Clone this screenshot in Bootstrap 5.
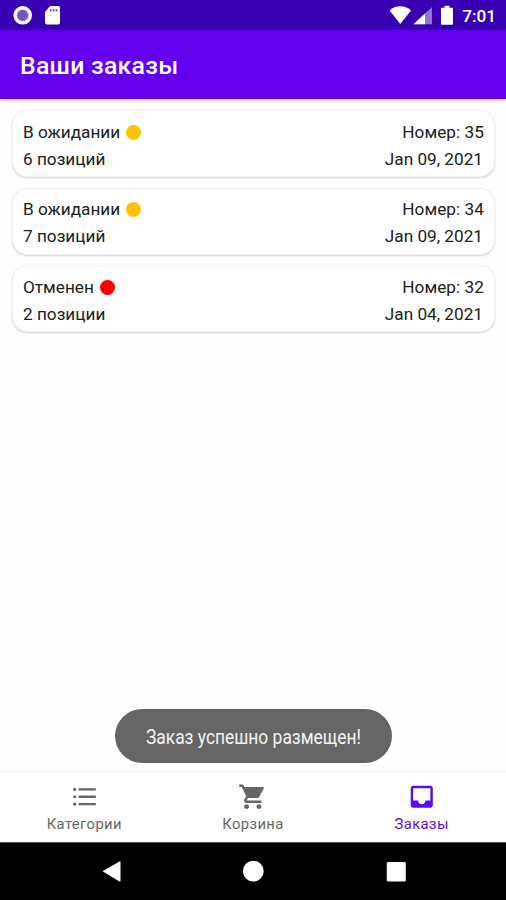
<!DOCTYPE html>
<html lang="ru">
<head>
<meta charset="utf-8">
<meta name="viewport" content="width=device-width, initial-scale=1">
<title>Ваши заказы</title>
<link href="https://cdn.jsdelivr.net/npm/bootstrap@5.3.0/dist/css/bootstrap.min.css" rel="stylesheet">
<style>
  body { font-family: Roboto, sans-serif; color: #202020; background: #fefefe; height: 900px; overflow: hidden; }
  .status-bar { height: 30px; background: #3900b3; padding: 0 10px 0 13px; }
  .clock { font-size: 17.2px; font-weight: 500; line-height: 30px; margin-left: 7px; padding-top: 2px; }
  .app-bar { height: 69px; background: #6200ee; padding-left: 20px; box-shadow: 0 1px 4px rgba(0,0,0,.28); z-index: 1; }
  .app-title { font-size: 24.8px; font-weight: 500; line-height: 32px; letter-spacing: .27px; padding-top: 3px; }
  .orders { padding: 11px 11px 0 12px; gap: 10.5px; }
  .order { height: 67px; border: 1px solid #f1f1f1; border-radius: 15px; background: #fff; padding: 7.500px 10px 0; box-shadow: 0 1px 2px rgba(0,0,0,.18); font-size: 17.2px; line-height: 27px; }
  .dot { width: 15px; height: 15px; margin-left: 6px; }
  .dot-wait { background: #ffc107; }
  .dot-cancel { background: #f00; }
  .num { letter-spacing: .05px; }
  .date { margin-right: 1px; }
  .snack { width: 277px; height: 54px; background: #656565; color: #f4f4f4; margin-bottom: 8px; font-size: 20px; }
  .snack span { transform: scaleX(.87); white-space: nowrap; padding: 1px 0 0 2px; }
  .tabs { height: 71px; border-top: 1px solid #f2f2f2; background: #fff; font-size: 14.8px; }
  .tab-item { color: #666; padding-top: 10px; line-height: 18px; letter-spacing: .4px; }
  .tab-item.current { color: #5c0aee; }
  .tab-item svg { width: 29.5px; height: 29.5px; margin-bottom: 3px; }
  .system-nav { height: 58px; background: #000; border-top: 1px solid #555; }
</style>
<script src="https://cdn.jsdelivr.net/npm/bootstrap@5.3.0/dist/js/bootstrap.bundle.min.js"></script>
</head>
<body class="d-flex flex-column">
  <div class="status-bar d-flex align-items-center text-white flex-shrink-0">
    <svg width="60" height="30" viewBox="0 0 60 30">
      <circle cx="9.7" cy="15.3" r="7.600" fill="#8365cf" stroke="#fff" stroke-width="3.400"/>
      <circle cx="9.7" cy="15.3" r="4.500" fill="#7653c4"/>
      <path fill="#fff" d="M37 6h8q2 0 2 2v14.500q0 2-2 2H34q-2 0-2-2V12z"/>
      <path fill="#3900b3" opacity=".7" d="M37 9h1.700v2.600H37zM39.900 9h1.600v2.600h-1.600zM42.700 9h1.500v2.600h-1.500z"/>
    </svg>
    <svg class="ms-auto" width="66" height="30" viewBox="0 0 66 30">
      <path fill="#fff" d="M.6 10.400C6.500 5 16 5 22 10.400L11.300 24z"/>
      <path fill="#9274d5" d="M43 7v17.300H24.500z"/>
      <path fill="#fff" d="M36 13.600v10.700H24.500z"/>
      <path fill="#fff" d="M55.500 5.700h5v2H63q1 0 1 1v15q0 1-1 1H53q-1 0-1-1v-15q0-1 1-1h2.500z"/>
    </svg>
    <span class="clock">7:01</span>
  </div>
  <header class="app-bar d-flex align-items-center text-white position-relative flex-shrink-0">
    <h1 class="app-title m-0">Ваши заказы</h1>
  </header>

  <main class="orders d-flex flex-column flex-grow-1">
    <article class="order">
      <div class="d-flex align-items-center"><span>В ожидании</span><span class="dot dot-wait rounded-circle"></span><span class="num ms-auto">Номер: 35</span></div>
      <div class="d-flex justify-content-between"><span>6 позиций</span><span class="date">Jan 09, 2021</span></div>
    </article>
    <article class="order">
      <div class="d-flex align-items-center"><span>В ожидании</span><span class="dot dot-wait rounded-circle"></span><span class="num ms-auto">Номер: 34</span></div>
      <div class="d-flex justify-content-between"><span>7 позиций</span><span class="date">Jan 09, 2021</span></div>
    </article>
    <article class="order">
      <div class="d-flex align-items-center"><span>Отменен</span><span class="dot dot-cancel rounded-circle"></span><span class="num ms-auto">Номер: 32</span></div>
      <div class="d-flex justify-content-between"><span>2 позиции</span><span class="date">Jan 04, 2021</span></div>
    </article>
  </main>

  <div class="snack rounded-pill d-flex align-items-center justify-content-center mx-auto flex-shrink-0" role="status"><span>Заказ успешно размещен!</span></div>

  <nav class="tabs row g-0 flex-shrink-0">
    <div class="tab-item col d-flex flex-column align-items-center">
      <svg viewBox="0 0 24 24" fill="currentColor"><circle cx="3.800" cy="6" r="1.300"/><circle cx="3.800" cy="12" r="1.300"/><circle cx="3.800" cy="18" r="1.300"/><path d="M7 5h14v2H7zM7 11h14v2H7zM7 17h14v2H7z"/></svg>
      <span>Категории</span>
    </div>
    <div class="tab-item col d-flex flex-column align-items-center">
      <svg viewBox="0 0 24 24" fill="currentColor"><path d="M7 18c-1.100 0-1.990.9-1.990 2S5.900 22 7 22s2-.9 2-2-.9-2-2-2zM1 2v2h2l3.600 7.590-1.350 2.450c-.16.28-.25.61-.25.96 0 1.100.9 2 2 2h12v-2H7.420c-.14 0-.25-.11-.25-.25l.03-.12.9-1.630h7.450c.75 0 1.410-.41 1.750-1.030l3.580-6.490c.08-.14.12-.31.12-.48 0-.55-.45-1-1-1H5.210l-.94-2H1zm16 16c-1.100 0-1.990.9-1.990 2s.89 2 1.990 2 2-.9 2-2-.9-2-2-2z"/></svg>
      <span>Корзина</span>
    </div>
    <div class="tab-item current col d-flex flex-column align-items-center">
      <svg viewBox="0 0 24 24" fill="currentColor"><path d="M19 3H4.990c-1.110 0-1.980.89-1.980 2L3 19c0 1.100.88 2 1.990 2H19c1.100 0 2-.9 2-2V5c0-1.110-.9-2-2-2zm0 12h-4c0 1.660-1.350 3-3 3s-3-1.340-3-3H4.990V5H19v10z"/></svg>
      <span>Заказы</span>
    </div>
  </nav>

  <div class="system-nav d-flex justify-content-center flex-shrink-0">
    <svg width="310" height="57" viewBox="0 0 310 57" fill="#fff">
      <path d="M4.500 28.300 21.500 18.400q1-.4 1 .6v18.800q0 1-1 .6z"/>
      <circle cx="155.300" cy="28.200" r="10.400"/>
      <rect x="288.800" y="19" width="19" height="19.400" rx="1.200"/>
    </svg>
  </div>
</body>
</html>
